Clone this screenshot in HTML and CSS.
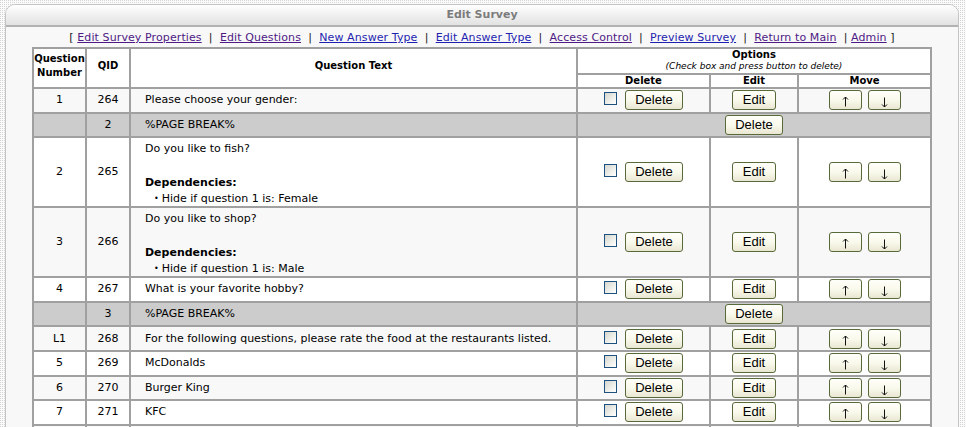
FILE: index.html
```html
<!DOCTYPE html>
<html>
<head>
<meta charset="utf-8">
<title>Edit Survey</title>
<link rel="stylesheet" href="styles.css">
</head>
<body>
<div class="panel">
  <div class="panel-head">Edit Survey</div>
  <div class="panel-body">
    <div class="nav">[ <a href="#" class="vis">Edit Survey Properties</a> &nbsp;| &nbsp;<a href="#" class="vis">Edit Questions</a> &nbsp;| &nbsp;<a href="#" class="new">New Answer Type</a> &nbsp;| &nbsp;<a href="#" class="new">Edit Answer Type</a> &nbsp;| &nbsp;<a href="#" class="vis">Access Control</a> &nbsp;| &nbsp;<a href="#" class="new">Preview Survey</a> &nbsp;| &nbsp;<a href="#" class="vis">Return to Main</a> &nbsp;| <a href="#" class="vis">Admin</a> ]</div>
    <table class="grid">
      <colgroup>
        <col class="c-num"><col class="c-qid"><col class="c-text"><col class="c-del"><col class="c-edit"><col class="c-move">
      </colgroup>
      <thead>
        <tr>
          <th rowspan="2" class="h-tall">Question<br>Number</th>
          <th rowspan="2" class="h-tall">QID</th>
          <th rowspan="2" class="h-tall">Question Text</th>
          <th colspan="3" class="h-opts">Options<br><i>(Check box and press button to delete)</i></th>
        </tr>
        <tr>
          <th class="h-sub">Delete</th>
          <th class="h-sub">Edit</th>
          <th class="h-sub">Move</th>
        </tr>
      </thead>
      <tbody>
        <tr class="light">
          <td class="num">1</td><td class="num">264</td><td class="qtext">Please choose your gender:</td>
          <td class="opt"><input type="checkbox" class="chk"><button class="btn">Delete</button></td>
          <td class="opt"><button class="btn">Edit</button></td>
          <td class="opt"><button class="btn arrow" aria-label="Move up"><svg class="ico" viewBox="0 0 7 11" width="7" height="11"><path d="M3.5 1V10.5M1 3.5L3.5 1L6 3.5"/></svg></button><button class="btn arrow" aria-label="Move down"><svg class="ico down" viewBox="0 0 7 11" width="7" height="11"><path d="M3.5 0.5V10M1 7.5L3.5 10L6 7.5"/></svg></button></td>
        </tr>
        <tr class="pbreak">
          <td class="num"></td><td class="num">2</td><td class="qtext">%PAGE BREAK%</td>
          <td class="opt" colspan="3"><button class="btn">Delete</button></td>
        </tr>
        <tr class="white tall">
          <td class="num">2</td><td class="num">265</td>
          <td class="qtext"><div class="qbody">Do you like to fish?<br><br><b>Dependencies:</b><ul class="deps"><li>Hide if question 1 is: Female</li></ul></div></td>
          <td class="opt"><input type="checkbox" class="chk"><button class="btn">Delete</button></td>
          <td class="opt"><button class="btn">Edit</button></td>
          <td class="opt"><button class="btn arrow" aria-label="Move up"><svg class="ico" viewBox="0 0 7 11" width="7" height="11"><path d="M3.5 1V10.5M1 3.5L3.5 1L6 3.5"/></svg></button><button class="btn arrow" aria-label="Move down"><svg class="ico down" viewBox="0 0 7 11" width="7" height="11"><path d="M3.5 0.5V10M1 7.5L3.5 10L6 7.5"/></svg></button></td>
        </tr>
        <tr class="light tall">
          <td class="num">3</td><td class="num">266</td>
          <td class="qtext"><div class="qbody">Do you like to shop?<br><br><b>Dependencies:</b><ul class="deps"><li>Hide if question 1 is: Male</li></ul></div></td>
          <td class="opt"><input type="checkbox" class="chk"><button class="btn">Delete</button></td>
          <td class="opt"><button class="btn">Edit</button></td>
          <td class="opt"><button class="btn arrow" aria-label="Move up"><svg class="ico" viewBox="0 0 7 11" width="7" height="11"><path d="M3.5 1V10.5M1 3.5L3.5 1L6 3.5"/></svg></button><button class="btn arrow" aria-label="Move down"><svg class="ico down" viewBox="0 0 7 11" width="7" height="11"><path d="M3.5 0.5V10M1 7.5L3.5 10L6 7.5"/></svg></button></td>
        </tr>
        <tr class="white">
          <td class="num">4</td><td class="num">267</td><td class="qtext">What is your favorite hobby?</td>
          <td class="opt"><input type="checkbox" class="chk"><button class="btn">Delete</button></td>
          <td class="opt"><button class="btn">Edit</button></td>
          <td class="opt"><button class="btn arrow" aria-label="Move up"><svg class="ico" viewBox="0 0 7 11" width="7" height="11"><path d="M3.5 1V10.5M1 3.5L3.5 1L6 3.5"/></svg></button><button class="btn arrow" aria-label="Move down"><svg class="ico down" viewBox="0 0 7 11" width="7" height="11"><path d="M3.5 0.5V10M1 7.5L3.5 10L6 7.5"/></svg></button></td>
        </tr>
        <tr class="pbreak">
          <td class="num"></td><td class="num">3</td><td class="qtext">%PAGE BREAK%</td>
          <td class="opt" colspan="3"><button class="btn">Delete</button></td>
        </tr>
        <tr class="light">
          <td class="num">L1</td><td class="num">268</td><td class="qtext">For the following questions, please rate the food at the restaurants listed.</td>
          <td class="opt"><input type="checkbox" class="chk"><button class="btn">Delete</button></td>
          <td class="opt"><button class="btn">Edit</button></td>
          <td class="opt"><button class="btn arrow" aria-label="Move up"><svg class="ico" viewBox="0 0 7 11" width="7" height="11"><path d="M3.5 1V10.5M1 3.5L3.5 1L6 3.5"/></svg></button><button class="btn arrow" aria-label="Move down"><svg class="ico down" viewBox="0 0 7 11" width="7" height="11"><path d="M3.5 0.5V10M1 7.5L3.5 10L6 7.5"/></svg></button></td>
        </tr>
        <tr class="white">
          <td class="num">5</td><td class="num">269</td><td class="qtext">McDonalds</td>
          <td class="opt"><input type="checkbox" class="chk"><button class="btn">Delete</button></td>
          <td class="opt"><button class="btn">Edit</button></td>
          <td class="opt"><button class="btn arrow" aria-label="Move up"><svg class="ico" viewBox="0 0 7 11" width="7" height="11"><path d="M3.5 1V10.5M1 3.5L3.5 1L6 3.5"/></svg></button><button class="btn arrow" aria-label="Move down"><svg class="ico down" viewBox="0 0 7 11" width="7" height="11"><path d="M3.5 0.5V10M1 7.5L3.5 10L6 7.5"/></svg></button></td>
        </tr>
        <tr class="light">
          <td class="num">6</td><td class="num">270</td><td class="qtext">Burger King</td>
          <td class="opt"><input type="checkbox" class="chk"><button class="btn">Delete</button></td>
          <td class="opt"><button class="btn">Edit</button></td>
          <td class="opt"><button class="btn arrow" aria-label="Move up"><svg class="ico" viewBox="0 0 7 11" width="7" height="11"><path d="M3.5 1V10.5M1 3.5L3.5 1L6 3.5"/></svg></button><button class="btn arrow" aria-label="Move down"><svg class="ico down" viewBox="0 0 7 11" width="7" height="11"><path d="M3.5 0.5V10M1 7.5L3.5 10L6 7.5"/></svg></button></td>
        </tr>
        <tr class="white">
          <td class="num">7</td><td class="num">271</td><td class="qtext">KFC</td>
          <td class="opt"><input type="checkbox" class="chk"><button class="btn">Delete</button></td>
          <td class="opt"><button class="btn">Edit</button></td>
          <td class="opt"><button class="btn arrow" aria-label="Move up"><svg class="ico" viewBox="0 0 7 11" width="7" height="11"><path d="M3.5 1V10.5M1 3.5L3.5 1L6 3.5"/></svg></button><button class="btn arrow" aria-label="Move down"><svg class="ico down" viewBox="0 0 7 11" width="7" height="11"><path d="M3.5 0.5V10M1 7.5L3.5 10L6 7.5"/></svg></button></td>
        </tr>
        <tr class="light stub">
          <td class="num"></td><td class="num"></td><td class="qtext"></td>
          <td class="opt"></td><td class="opt"></td><td class="opt"></td>
        </tr>
      </tbody>
    </table>
  </div>
</div>
</body>
</html>
```

FILE: styles.css
```css
html, body {
  margin: 0;
  padding: 0;
  overflow: hidden;
  height: 100%;
}

body {
  background-color: #d4d4d4;
  background-image:
    linear-gradient(90deg, transparent 1px, #fbfbfb 1px),
    linear-gradient(transparent 1px, #fbfbfb 1px);
  background-size: 2px 2px;
  font-family: "DejaVu Sans", Verdana, sans-serif;
  font-size: 11px;
  color: #000;
}

.panel {
  margin: 4px 0 0 5px;
  width: 952px;
  min-height: 600px;
  border: 1px solid #c4c4c4;
  border-radius: 10px 10px 0 0;
  background: #f8f8f8;
}

.panel-head {
  height: 20px;
  line-height: 20px;
  text-align: center;
  font-weight: bold;
  font-size: 11px;
  color: #7c7c7c;
  border-radius: 9px 9px 0 0;
  background: linear-gradient(#ffffff, #f0f0f0 50%, #e2e2e2);
  border-bottom: 2px solid #b2b2b2;
}

.nav {
  text-align: center;
  line-height: 13px;
  padding: 4px 0 3px;
  color: #222;
  letter-spacing: 0.1px;
}

.nav a {
  text-decoration: underline;
}

.nav a.vis {
  color: #4f1a85;
}

.nav a.new {
  color: #1f1fb0;
}

.grid {
  width: 900px;
  margin: 0 auto;
  border-collapse: collapse;
  table-layout: fixed;
  background: #fff;
}

.c-num { width: 53px; }
.c-qid { width: 44px; }
.c-text { width: 447px; }
.c-del { width: 133px; }
.c-edit { width: 88px; }
.c-move { width: 133px; }

.grid th,
.grid td {
  border: 2px solid #a0a0a0;
}

.grid th {
  font-size: 10px;
  font-weight: bold;
  background: #fff;
  text-align: center;
  padding: 0;
}

.h-tall {
  line-height: 14px;
  padding-bottom: 4px !important;
}

.h-opts {
  line-height: 11px;
  padding: 0 0 1px !important;
  height: 22px;
}

.h-opts i {
  font-weight: normal;
  font-size: 9px;
}

.h-sub {
  line-height: 12px;
  height: 12px;
}

.grid td {
  padding: 1.3px 0;
  vertical-align: middle;
  line-height: 20px;
}

.light td { background: #f8f8f8; }
.white td { background: #fff; }
.pbreak td { background: #cccccc; }

.stub td {
  height: 20px;
}

.num {
  text-align: center;
}

.qtext {
  padding-left: 14px !important;
}

.tall td {
  padding: 0;
}

.qbody {
  line-height: 17px;
  padding-top: 2px;
}

.deps {
  margin: 0;
  padding: 0 0 0 9px;
  list-style: none;
  line-height: 15px;
}

.deps li::before {
  content: "\2022";
  font-size: 8px;
  margin-right: 3px;
  vertical-align: 1px;
}

.opt {
  text-align: center;
  white-space: nowrap;
}

.chk {
  appearance: none;
  -webkit-appearance: none;
  width: 13px;
  height: 13px;
  margin: 2px 8px 0 0;
  padding: 0;
  border: 1px solid #1c5180;
  background: linear-gradient(135deg, #d6d6d0 0%, #f4f4f0 70%, #ffffff 100%);
  vertical-align: top;
  box-sizing: border-box;
}

.btn {
  font-family: "Liberation Sans", Arial, sans-serif;
  font-size: 13px;
  height: 20px;
  line-height: 18px;
  padding: 0 9.5px;
  margin: 0;
  border: 1px solid #58693a;
  border-radius: 3px;
  background: linear-gradient(#fffffa, #f8f8ea 55%, #e9e7d2);
  color: #000;
  vertical-align: top;
  box-sizing: border-box;
}

.arrow {
  width: 33px;
  padding: 0;
  line-height: 0;
}

.arrow + .arrow {
  margin-left: 6px;
}

.ico {
  display: inline-block;
  fill: none;
  stroke: #111;
  stroke-width: 1;
  margin-top: 3px;
}

.ico.down {
  margin-top: 5px;
}
```
